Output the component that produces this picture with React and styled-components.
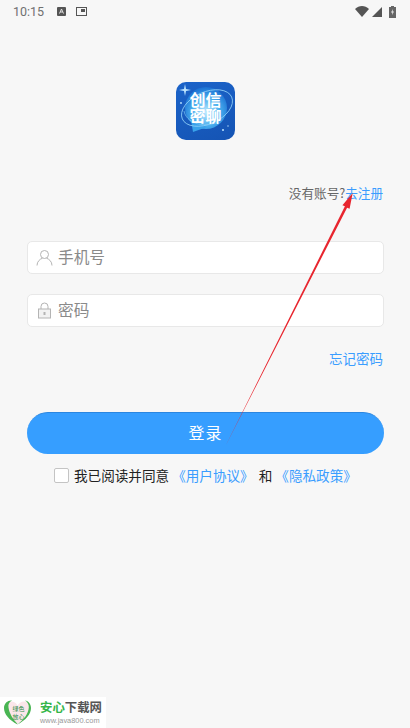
import React, { useState } from "react";
import styled, { createGlobalStyle } from "styled-components";

const GlobalStyle = createGlobalStyle`
  html, body {
    margin: 0;
    padding: 0;
    background: #f7f7f7;
  }
  * {
    box-sizing: border-box;
  }
`;

const Page = styled.div`
  position: relative;
  width: 410px;
  height: 728px;
  overflow: hidden;
  background: #f7f7f7;
  font-family: "Noto Sans CJK SC", "Noto Sans", sans-serif;
`;

const StatusBar = styled.div`
  display: flex;
  align-items: center;
  height: 23px;
  padding: 0 14px 0 13px;
  color: #707070;
`;

const Time = styled.span`
  font-family: Roboto, sans-serif;
  font-size: 12.5px;
  margin-right: 3px;
`;

const StatusLeft = styled.div`
  display: flex;
  align-items: center;
  gap: 10px;
  flex: 1;
`;

const StatusRight = styled.div`
  display: flex;
  align-items: center;
  gap: 3px;
`;

const Form = styled.div`
  display: flex;
  flex-direction: column;
  padding: 0 26px 0 27px;
`;

const LogoWrap = styled.div`
  display: flex;
  justify-content: center;
  margin-top: 59px;
`;

const Logo = styled.div`
  position: relative;
  width: 59px;
  height: 58px;
  padding-bottom: 8px;
  border-radius: 10px;
  overflow: hidden;
  background: linear-gradient(160deg, #1b63c9, #1554b4);
  display: flex;
  align-items: center;
  justify-content: center;
`;

const LogoText = styled.span`
  position: relative;
  font-size: 16px;
  line-height: 16px;
  font-weight: 700;
  color: #fff;
  text-align: center;
  width: 34px;
`;

const LogoArt = styled.svg`
  position: absolute;
  inset: 0;
`;

const RegisterRow = styled.div`
  display: flex;
  justify-content: flex-end;
  margin-top: 43px;
  padding-right: 1px;
  font-size: 12.6px;
  line-height: 20px;
  color: #666;
`;

const BlueText = styled.span`
  color: #3a9dff;
`;

const Field = styled.div`
  display: flex;
  align-items: center;
  height: 33px;
  margin-top: ${(p) => p.$top}px;
  padding-left: 8px;
  background: #fff;
  border: 1px solid #e8e8e8;
  border-radius: 5px;
`;

const FieldInput = styled.input`
  flex: 1;
  min-width: 0;
  margin-left: 5px;
  padding: 0 0 2px;
  border: none;
  outline: none;
  background: transparent;
  font-family: inherit;
  font-size: 15.7px;
  color: #333;

  &::placeholder {
    color: #8a8a8a;
    opacity: 1;
  }
`;

const ForgotRow = styled.div`
  display: flex;
  justify-content: flex-end;
  margin-top: 21px;
  padding-right: 1px;
  font-size: 13.5px;
  line-height: 20px;
`;

const LoginButton = styled.button`
  height: 42px;
  margin-top: 44px;
  border: none;
  border-top: 1px solid #2b86e0;
  border-radius: 21px;
  background: #369eff;
  color: #fff;
  font-family: inherit;
  font-size: 16px;
  letter-spacing: 1px;
  padding: 0 0 4px;
`;

const Agreement = styled.label`
  display: flex;
  align-items: center;
  margin-top: 12px;
  padding-left: 27px;
  font-size: 13.6px;
  line-height: 18px;
  color: #222;
`;

const CheckBox = styled.input`
  appearance: none;
  width: 15px;
  height: 15px;
  margin: 0 5px 0 0;
  background: #fff;
  border: 1px solid #c4c4c4;
  border-radius: 2px;

  &:checked {
    background: #369eff;
  }
`;

const Joiner = styled.span`
  margin-left: 5px;
`;

const AgreeLink = styled(BlueText)`
  margin-left: 3px;
`;

const ArrowOverlay = styled.svg`
  position: absolute;
  left: 0;
  top: 0;
  pointer-events: none;
`;

const Watermark = styled.div`
  position: absolute;
  left: 0;
  bottom: 0;
  width: 106px;
  height: 31px;
  display: flex;
  align-items: center;
  padding-left: 3px;
  gap: 8px;
  background: #fff;
`;

const MarkText = styled.div`
  display: flex;
  flex-direction: column;
  gap: 2px;
`;

const MarkTitle = styled.span`
  font-size: 12.4px;
  line-height: 14px;
  font-weight: 700;
  color: #555;
`;

const MarkGreen = styled.span`
  color: #35b54a;
`;

const MarkUrl = styled.span`
  font-family: "Liberation Sans", sans-serif;
  font-size: 7.4px;
  line-height: 9px;
  color: #999;
`;

const HeartWrap = styled.div`
  position: relative;
  width: 29px;
  height: 27px;
`;

const HeartLabel = styled.span`
  position: absolute;
  left: 9px;
  top: 6px;
  width: 13px;
  font-size: 6px;
  line-height: 8px;
  text-align: center;
  color: #2f8f4a;
`;

const UserIcon = () => (
  <svg width="17" height="17" viewBox="0 0 17 17" fill="none" stroke="#b4b4b4" strokeWidth="1">
    <circle cx="8.5" cy="5.5" r="4" />
    <path d="M1 16.500c0-4 3-6.500 5.500-7.300M16 16.500c0-4-3-6.500-5.500-7.300" />
  </svg>
);

const LockIcon = () => (
  <svg width="17" height="17" viewBox="0 0 17 17" fill="none" stroke="#b4b4b4" strokeWidth="1">
    <rect x="2.500" y="7" width="12" height="9" fill="#f2f2f2" />
    <path d="M5 7V4.500a3.500 3.500 0 0 1 7 0V7" />
    <rect x="7.500" y="10" width="2" height="3" fill="#b4b4b4" stroke="none" />
  </svg>
);

const App = () => {
  const [agreed, setAgreed] = useState(false);

  return (
    <Page>
      <GlobalStyle />
      <StatusBar>
        <StatusLeft>
          <Time>10:15</Time>
          <svg width="9" height="9" viewBox="0 0 9 9">
            <rect width="9" height="9" rx="1" fill="#555" />
            <path d="M2.500 6.500 4.500 2l2 4.500M3.300 5h2.400" stroke="#eee" strokeWidth="0.9" fill="none" />
          </svg>
          <svg width="11" height="9" viewBox="0 0 11 9">
            <rect x="0.500" y="0.500" width="10" height="8" fill="none" stroke="#555" />
            <rect x="5" y="2" width="4" height="3" fill="#555" />
          </svg>
        </StatusLeft>
        <StatusRight>
          <svg width="14" height="11" viewBox="0 0 14 11">
            <path d="M0 3C4-1 10-1 14 3L7 11Z" fill="#555" />
          </svg>
          <svg width="10" height="10" viewBox="0 0 10 10">
            <path d="M10 0V10H0Z" fill="#555" />
          </svg>
          <svg width="7" height="12" viewBox="0 0 7 12" style={{ marginLeft: 4 }}>
            <path d="M2 0h3v1h2v11H0V1h2Z" fill="#666" />
            <path d="M4 3 2 6.500h1.400L3 9l2-3.500H3.600Z" fill="#eee" />
          </svg>
        </StatusRight>
      </StatusBar>

      <Form>
        <LogoWrap>
          <Logo>
            <LogoArt width="59" height="58" viewBox="0 0 59 58">
              <defs>
                <radialGradient id="bubble" cx="0.5" cy="0.6" r="0.6">
                  <stop offset="0" stopColor="#bfeaff" />
                  <stop offset="0.55" stopColor="#49aeee" />
                  <stop offset="1" stopColor="#1a6fd2" />
                </radialGradient>
              </defs>
              <circle cx="30" cy="26" r="21" fill="url(#bubble)" />
              <path d="M15 38 17 50 31 45Z" fill="#39a2ea" />
              <ellipse cx="31" cy="26" rx="27" ry="16" transform="rotate(-24 31 26)" fill="none" stroke="#8fd0f7" strokeWidth="0.8" />
              <path d="M8 29C10 40 26 47 42 40" fill="none" stroke="#7cc8f5" strokeWidth="0.7" />
              <path d="M9 2 10 7 15 8 10 9 9 14 8 9 3 8 8 7Z" fill="#bfe6ff" />
              <circle cx="47" cy="48" r="1" fill="#bfe6ff" />
              <circle cx="52" cy="44" r="0.7" fill="#bfe6ff" />
              <circle cx="5" cy="21" r="0.9" fill="#bfe6ff" />
            </LogoArt>
            <LogoText>创信密聊</LogoText>
          </Logo>
        </LogoWrap>

        <RegisterRow>
          没有账号?<BlueText>去注册</BlueText>
        </RegisterRow>

        <Field $top={38}>
          <UserIcon />
          <FieldInput placeholder="手机号" />
        </Field>
        <Field $top={20}>
          <LockIcon />
          <FieldInput type="password" placeholder="密码" />
        </Field>

        <ForgotRow>
          <BlueText>忘记密码</BlueText>
        </ForgotRow>

        <LoginButton>登录</LoginButton>

        <Agreement>
          <CheckBox
            type="checkbox"
            checked={agreed}
            onChange={(e) => setAgreed(e.target.checked)}
          />
          我已阅读并同意
          <AgreeLink>《用户协议》</AgreeLink>
          <Joiner>和</Joiner>
          <AgreeLink>《隐私政策》</AgreeLink>
        </Agreement>
      </Form>

      <ArrowOverlay width="410" height="728" viewBox="0 0 410 728">
        <path d="M226 445 344.900 206.300 342.400 205.200 352.700 193 349.600 208.800 347.100 207.700Z" fill="#e8262f" />
      </ArrowOverlay>

      <Watermark>
        <HeartWrap>
          <svg width="29" height="27" viewBox="0 0 29 27">
            <path d="M14.500 25C6 21 2 15 2 9c0-4 3-7 7-6.500 2.500.3 4.500 2 5.500 4C16 4 18.500 2 22 2.500c3 .5 5 3.500 5 6.500 0 6-4 12-12.500 16Z" fill="#fbe6ea" />
            <path d="M14.500 25.500C6 21 1 15 1 9c0-5 4-8 8-7.500-3 1.500-4 4-3.500 7 .8 6 4.500 11.500 9 16.500Z" fill="#49b553" />
            <path d="M14.500 25.500C23 21 28 15 28 9c0-4-2.500-7-6-7.500 2.500 1.500 4 4 3.800 7-.4 6-4.800 12-11.300 17Z" fill="#49b553" />
          </svg>
          <HeartLabel>绿色放心</HeartLabel>
        </HeartWrap>
        <MarkText>
          <MarkTitle>
            <MarkGreen>安心</MarkGreen>下载网
          </MarkTitle>
          <MarkUrl>www.java800.com</MarkUrl>
        </MarkText>
      </Watermark>
    </Page>
  );
};

export default App;
